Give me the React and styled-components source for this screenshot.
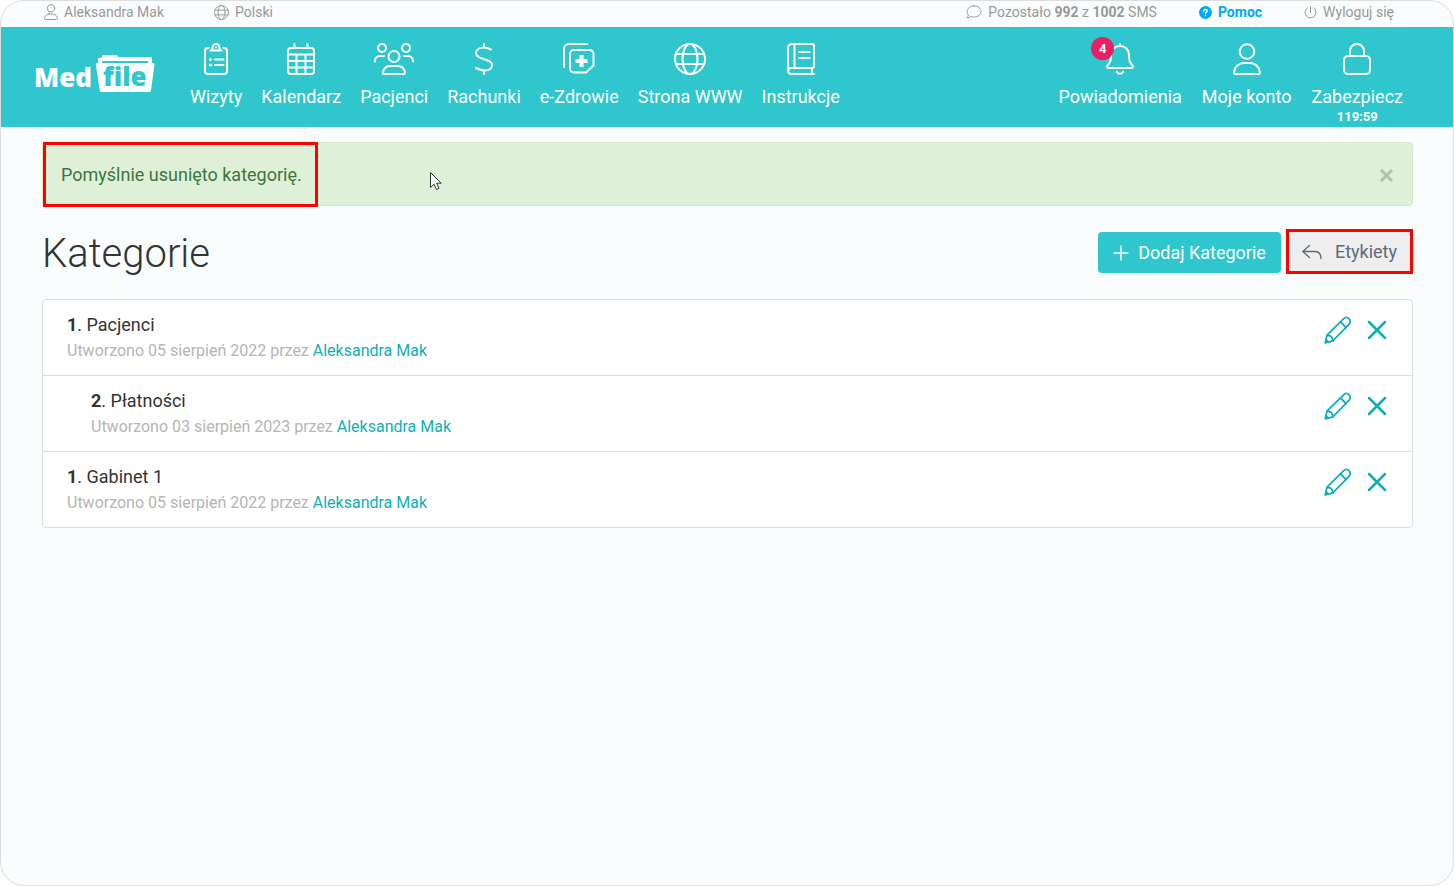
import React, { useState } from 'react';
import styled, { createGlobalStyle } from 'styled-components';

const GlobalStyle = createGlobalStyle`
* {
  box-sizing: border-box;
}
body {
  margin: 0;
  background: white;
  color: #333333;
  font-family: Roboto, "Liberation Sans", sans-serif;
  font-size: 18px;
}
a {
  color: inherit;
  text-decoration: none;
}
button {
  font-family: inherit;
  cursor: pointer;
}
`;

const Page = styled.div`
min-height: 100vh;
overflow: hidden;
background: #f9fdfe;
border: 1px solid #dddddd;
border-radius: 24px;
`;

const TopBar = styled.div`
display: flex;
justify-content: space-between;
height: 26px;
padding: 0 59px 0 43px;
color: #999999;
font-size: 14px;
line-height: 22px;
`;

const TopGroup = styled.div`
display: flex;
gap: ${props => props.$gap};
`;

const TopItem = styled.span`
display: flex;
align-items: center;
gap: 6px;
height: 22px;
white-space: nowrap;
`;

const TopLink = styled(TopItem)`
color: ${props => props.$bold ? '#03a9f4' : '#999999'};
font-weight: ${props => props.$bold ? 700 : 400};
`;

const Header = styled.header`
display: flex;
align-items: flex-start;
height: 100px;
padding: 16px 50px 0 33px;
background: #30c6cd;
color: white;
`;

const LogoLink = styled.a`
display: block;
margin: 9px 35px 0 0;
line-height: 0;
`;

const Nav = styled.nav`
display: flex;
gap: ${props => props.$right ? '20px' : '19px'};
margin-left: ${props => props.$right ? 'auto' : '0'};
`;

const NavLink = styled.a`
display: flex;
flex-direction: column;
align-items: center;
white-space: nowrap;
`;

const NavIcon = styled.span`
position: relative;
height: 32px;
line-height: 0;
`;

const NavLabel = styled.span`
margin-top: 10px;
line-height: 24px;
font-size: 18px;
`;

const Timer = styled.span`
font-size: 13px;
line-height: 15px;
font-weight: 700;
`;

const Badge = styled.span`
position: absolute;
top: -6px;
left: -15px;
width: 23px;
height: 23px;
border-radius: 50%;
background: #e91e63;
text-align: center;
font-size: 13px;
line-height: 23px;
font-weight: 700;
`;

const Main = styled.main`
padding: 15px 40px 40px 41px;
`;

const Alert = styled.div`
position: relative;
display: flex;
align-items: center;
justify-content: space-between;
padding-right: 18px;
background: #dff0d8;
border: 1px solid #d6e9c6;
border-radius: 4px;
color: #3c763d;
`;

const Message = styled.span`
margin: -1px 0 -2px;
padding: 18px 13px 17px 15px;
border: 3px solid #ff0000;
line-height: 24px;
`;

const CloseButton = styled.button`
padding: 2px 0 0;
border: 0;
background: none;
color: #b2c0ad;
line-height: 0;
`;

const Cursor = styled.svg`
position: absolute;
left: 386px;
top: 28px;
`;

const TitleRow = styled.div`
display: flex;
align-items: center;
justify-content: space-between;
margin: 23px 0 25px;
`;

const Title = styled.h1`
margin: 0;
padding-top: 5px;
font-size: 40px;
line-height: 40px;
font-weight: 300;
`;

const Buttons = styled.div`
display: flex;
align-items: flex-end;
gap: 5px;
`;

const Button = styled.button`
display: flex;
align-items: center;
gap: 9px;
height: 41px;
margin-bottom: 1px;
padding: 0 15px;
border: 0;
border-radius: 4px;
background: #30c6cd;
color: white;
font-size: 18px;
`;

const BackButton = styled(Button)`
gap: 13px;
height: 45px;
margin-bottom: 0;
padding: 0 13px;
border: 3px solid #ff0000;
border-radius: 0;
background: #eeeeee;
color: #5d6b7a;
`;

const List = styled.ul`
margin: 0;
padding: 0;
list-style: none;
background: white;
border: 1px solid #dddddd;
border-radius: 4px;
`;

const Row = styled.li`
display: flex;
justify-content: space-between;
padding: 12px 25px 11px;
padding-left: ${props => props.$nested ? '48px' : '24px'};

& + & {
  border-top: 1px solid #dddddd;
}
`;

const Name = styled.div`
line-height: 26px;
`;

const Created = styled.div`
color: #b5b5b5;
font-size: 16px;
line-height: 26px;
`;

const Author = styled.a`
color: #12aeb5;
`;

const Actions = styled.div`
display: flex;
align-items: center;
gap: 15px;
height: 36px;
`;

const IconButton = styled.button`
padding: 0;
border: 0;
background: none;
color: #12aeb5;
line-height: 0;
`;

// line icon, one svg unit is one pixel
const Svg = ({ w, h = 32, size, stroke = 2, children }) => (
  <svg width={size || w} height={size ? size * h / w : h} viewBox={`0 0 ${w} ${h}`} fill="none"
    stroke="currentColor" strokeWidth={stroke} strokeLinecap="round" strokeLinejoin="round" aria-hidden="true">
    {children}
  </svg>
);

const ClipboardIcon = () => (
  <Svg w={24}>
    <path d="M4.5 5H4a3 3 0 0 0-3 3v20a3 3 0 0 0 3 3h16a3 3 0 0 0 3-3V8a3 3 0 0 0-3-3h-.5" />
    <path d="M6.5 7.5h11M8.5 7V4.5a3.5 3.5 0 0 1 7 0V7M11 16.500h8.500M11 22h8.500" />
    <path d="M12 4.500h.01" />
    <path d="M6.500 16.500h.01M6.500 22h.01" strokeWidth="3" />
  </Svg>
);

const CalendarIcon = () => (
  <Svg w={28}>
    <rect x="1" y="5" width="26" height="26" rx="3" />
    <path d="M7.500 1v4M20.500 1v4M1 11.500h26M1 18h26M1 24.500h26M9.500 11.500V31M18.500 11.500V31" />
  </Svg>
);

const UsersIcon = () => (
  <Svg w={40}>
    <circle cx="8" cy="5" r="4" />
    <circle cx="32" cy="5" r="4" />
    <circle cx="20" cy="13.500" r="5.500" />
    <path d="M1 18.500V18a5 5 0 0 1 5-5h4M39 18.500V18a5 5 0 0 0-5-5h-4" />
    <path d="M16 23h8a7 7 0 0 1 7 7q0 1-1 1H10q-1 0-1-1a7 7 0 0 1 7-7z" />
  </Svg>
);

const DollarIcon = () => (
  <Svg w={20}>
    <path d="M10 1v3.500M10 27.500V31" />
    <path d="M17 6.500C13.500 4.800 11.500 4.400 9.500 4.500 5.500 4.600 2 6.500 2 10c0 3.500 3 4.600 7.500 6 5 1.500 8.500 2.600 8.500 6.200 0 3.600-3.500 5.300-7.500 5.300-2.800 0-5.500-1-8.500-2.500" />
  </Svg>
);

const HealthIcon = () => (
  <Svg w={32}>
    <path d="M1 24V6a5 5 0 0 1 5-5h18" />
    <path d="M11 7h15.500a4 4 0 0 1 4 4v11.500l-7.500 7H11a4 4 0 0 1-4-4V11a4 4 0 0 1 4-4z" />
    <path d="M18.500 12v12M12.500 18h12" strokeWidth="4" strokeLinecap="butt" />
  </Svg>
);

const GlobeIcon = ({ size, stroke }) => (
  <Svg w={32} size={size} stroke={stroke}>
    <circle cx="16" cy="16" r="15" />
    <ellipse cx="16" cy="16" rx="7.500" ry="15" />
    <path d="M2 11h28M2 21h28" />
  </Svg>
);

const BookIcon = () => (
  <Svg w={28}>
    <path d="M4.500 25H25a2 2 0 0 0 2-2V3a2 2 0 0 0-2-2H5a4 4 0 0 0-4 4v22.500A3.500 3.500 0 0 0 4.500 31H27" />
    <path d="M1 28a3 3 0 0 1 3.500-3M7.500 1v24M25 25v6M12 9h10.500M12 15h10.500" />
  </Svg>
);

const BellIcon = () => (
  <Svg w={28}>
    <path d="M14 1v2M10.800 28.500c1 3 5.400 3 6.400 0" />
    <path d="M14 3c-5 0-9 3.800-9 9v2.500c0 3-.8 5-3 7.500-1.600 1.900-1 3 .8 3h22.400c1.800 0 2.400-1.100.8-3-2.200-2.500-3-4.500-3-7.500V12c0-5.200-4-9-9-9z" />
  </Svg>
);

const UserIcon = ({ size, stroke }) => (
  <Svg w={28} size={size} stroke={stroke}>
    <circle cx="14" cy="8.500" r="7.300" />
    <path d="M11 20h6a10 10 0 0 1 10 9.500q0 1.500-1.500 1.500h-23Q1 31 1 29.500A10 10 0 0 1 11 20z" />
  </Svg>
);

const LockIcon = () => (
  <Svg w={28}>
    <rect x="1" y="13" width="26" height="18" rx="4" />
    <path d="M7 13V8a7 7 0 0 1 14 0v5" />
  </Svg>
);

const ChatIcon = () => (
  <Svg w={16} h={14} stroke={1}>
    <path d="M8.200 1C12 1 15 3.300 15 6.500S12 12 8.200 12c-1.200 0-2.300-.2-3.300-.6-1.200 1-2.500 1.500-4.200 1.500 1-1 1.600-2 1.700-3C1.500 9 1.200 7.800 1.200 6.500 1.200 3.300 4.400 1 8.200 1z" />
  </Svg>
);

const PowerIcon = () => (
  <Svg w={13} h={13} stroke={1}>
    <path d="M6.500.5v6M3.500 1.800a5.500 5.500 0 1 0 6 0" />
  </Svg>
);

const HelpIcon = () => (
  <Svg w={13} h={13} stroke={1}>
    <circle cx="6.500" cy="6.500" r="6.500" fill="currentColor" stroke="none" />
    <path d="M4.800 5c.1-1.100.7-1.600 1.700-1.600s1.800.6 1.800 1.500c0 1.200-1.800 1.200-1.800 2.400M6.500 9.400v.2" stroke="white" strokeWidth="1.400" />
  </Svg>
);

const PlusIcon = () => (
  <Svg w={16} h={16} stroke={1.4}>
    <path d="M8 1v14M1 8h14" />
  </Svg>
);

const ReplyIcon = () => (
  <Svg w={20} h={16} stroke={1.3}>
    <path d="M7.500 1.500.8 7.500l6.700 6M1 7.500h11.500c4 0 6.500 2.500 6.500 7" />
  </Svg>
);

const PencilIcon = () => (
  <Svg w={28} h={28}>
    <path d="M1.200 26.800 3 19.200 19.500 2.800c1.700-1.700 3.900-1.700 5.500-.1 1.700 1.700 1.700 3.900 0 5.600L8.800 24.800z" strokeWidth="1.800" />
    <path d="M16.500 6l5.500 5.500M3.200 19.200c3.200.2 5.400 2.400 5.600 5.600M2.200 24l2 2" strokeWidth="1.800" />
  </Svg>
);

const CrossIcon = () => (
  <Svg w={20} h={20}>
    <path d="M2 2l16 16M18 2 2 18" strokeWidth="2.500" />
  </Svg>
);

const Logo = () => (
  <svg width="121" height="46" viewBox="0 -3 121 46" fill="white" fontFamily="'Open Sans', sans-serif" fontWeight="800" fontSize="26">
    <text x="0" y="32">Med</text>
    <path d="M64 9V4q0-1 1-1h2l1-2q.5-1 1.500-1H82q1 0 1.500 1l.5 1h33q1 0 1 1v6z" />
    <path d="M68 8V6h46v2z" fill="#30c6cd" />
    <path d="M62.500 8h57q1.200 0 1 1.500l-3.500 26q-.3 1.500-1.500 1.500h-48q-1.500 0-1.700-1.500l-4-26Q61.500 8 62.500 8z" />
    <text x="69" y="31" fill="#30c6cd">file</text>
  </svg>
);

const leftNav = [
  { label: 'Wizyty', icon: <ClipboardIcon /> },
  { label: 'Kalendarz', icon: <CalendarIcon /> },
  { label: 'Pacjenci', icon: <UsersIcon /> },
  { label: 'Rachunki', icon: <DollarIcon /> },
  { label: 'e-Zdrowie', icon: <HealthIcon /> },
  { label: 'Strona WWW', icon: <GlobeIcon /> },
  { label: 'Instrukcje', icon: <BookIcon /> },
];

const rightNav = [
  { label: 'Powiadomienia', icon: <BellIcon />, badge: 4 },
  { label: 'Moje konto', icon: <UserIcon /> },
  { label: 'Zabezpiecz', icon: <LockIcon />, timer: '119:59' },
];

const categories = [
  { level: 1, name: 'Pacjenci', date: '05 sierpień 2022', author: 'Aleksandra Mak' },
  { level: 2, name: 'Płatności', date: '03 sierpień 2023', author: 'Aleksandra Mak' },
  { level: 1, name: 'Gabinet 1', date: '05 sierpień 2022', author: 'Aleksandra Mak' },
];

const NavItem = ({ item }) => (
  <NavLink href="#">
    <NavIcon>
      {item.icon}
      {item.badge && <Badge>{item.badge}</Badge>}
    </NavIcon>
    <NavLabel>{item.label}</NavLabel>
    {item.timer && <Timer>{item.timer}</Timer>}
  </NavLink>
);

function App() {

  const [alertOpen, setAlertOpen] = useState(true);

  return (
    <Page>
      <GlobalStyle />
      <TopBar>
        <TopGroup $gap="50px">
          <TopItem><UserIcon size={14} stroke={2} />Aleksandra Mak</TopItem>
          <TopLink as="a" href="#"><GlobeIcon size={15} stroke={2} />Polski</TopLink>
        </TopGroup>
        <TopGroup $gap="42px">
          <TopItem><ChatIcon /><span>Pozostało <b>992</b> z <b>1002</b> SMS</span></TopItem>
          <TopLink as="a" href="#" $bold><HelpIcon />Pomoc</TopLink>
          <TopLink as="a" href="#"><PowerIcon />Wyloguj się</TopLink>
        </TopGroup>
      </TopBar>

      <Header>
        <LogoLink href="#" aria-label="MedFile"><Logo /></LogoLink>
        <Nav>
          {leftNav.map(item => <NavItem key={item.label} item={item} />)}
        </Nav>
        <Nav $right>
          {rightNav.map(item => <NavItem key={item.label} item={item} />)}
        </Nav>
      </Header>

      <Main>
        {alertOpen &&
          <Alert role="alert">
            <Message>Pomyślnie usunięto kategorię.</Message>
            <CloseButton aria-label="Zamknij" onClick={() => setAlertOpen(false)}>
              <Svg w={15} h={15} stroke={3}><path d="M2 2l11 11M13 2 2 13" strokeLinecap="butt" /></Svg>
            </CloseButton>
            <Cursor width="14" height="20" viewBox="0 0 14 20">
              <path d="M1.500 1.500v15l3.500-3.300 2.500 5.300 2.500-1.200-2.400-5.100h4.600z" fill="white" stroke="#333333" />
            </Cursor>
          </Alert>
        }

        <TitleRow>
          <Title>Kategorie</Title>
          <Buttons>
            <Button><PlusIcon />Dodaj Kategorie</Button>
            <BackButton><ReplyIcon />Etykiety</BackButton>
          </Buttons>
        </TitleRow>

        <List>
          {categories.map((cat, i) => (
            <Row key={i} $nested={cat.level > 1}>
              <div>
                <Name><b>{cat.level}</b>. {cat.name}</Name>
                <Created>Utworzono {cat.date} przez <Author href="#">{cat.author}</Author></Created>
              </div>
              <Actions>
                <IconButton aria-label="Edytuj"><PencilIcon /></IconButton>
                <IconButton aria-label="Usuń"><CrossIcon /></IconButton>
              </Actions>
            </Row>
          ))}
        </List>
      </Main>
    </Page>
  );
}

export default App;
